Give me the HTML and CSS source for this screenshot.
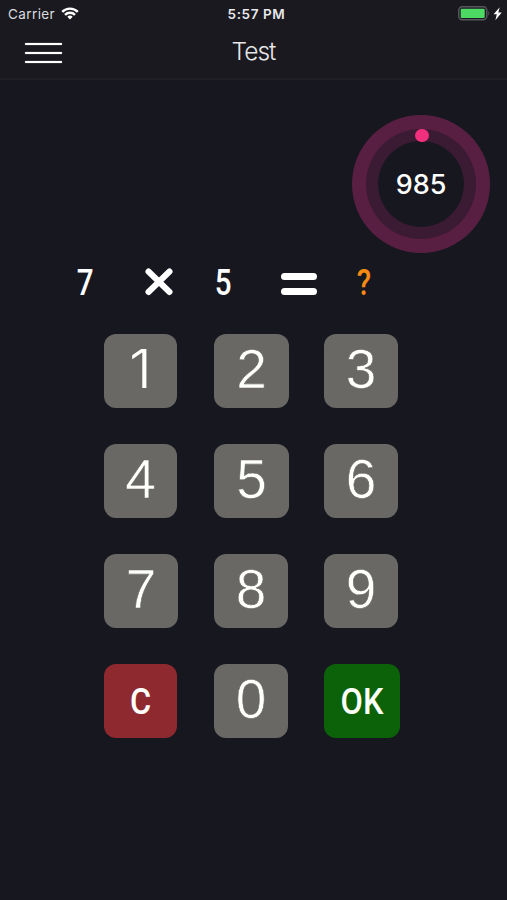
FILE: index.html
```html
<!DOCTYPE html>
<html lang="en">
<head>
<meta charset="utf-8">
<title>Test</title>
<link rel="stylesheet" href="styles.css">
</head>
<body>
<header class="header">
  <div class="status">
    <div class="status-left"><span class="carrier">Carrier</span>
      <svg class="wifi" width="18" height="13" viewBox="0 0 18 13" fill="none" stroke="#fff" stroke-width="2.4"><path d="M1.2 4.9a11 11 0 0 1 15.6 0"/><path d="M4 7.9a7 7 0 0 1 10 0"/><path d="M9 12.5 6.3 9.8a3.9 3.9 0 0 1 5.4 0z" fill="#fff" stroke="none"/></svg>
    </div>
    <span class="clock">5:57 PM</span>
    <svg class="battery" width="45" height="16" viewBox="0 0 45 16"><rect x=".75" y=".75" width="28" height="13" rx="3.5" fill="none" stroke="#55575b" stroke-width="1.5"/><rect x="2.7" y="2.7" width="24" height="9.2" rx="1" fill="#4cd964"/><path d="M30.3 4.7q2 2.5 0 5z" fill="#55575b"/><path d="M41.7 1.2 35.6 8.2h3.2l-1.4 6 6.3-7.8h-3.4z" fill="#fff"/></svg>
  </div>
  <div class="nav">
    <button class="menu" aria-label="Menu"><i></i><i></i><i></i></button>
    <h1 class="title">Test</h1>
  </div>
</header>
<main class="main">
  <div class="timer"><div class="track"><div class="face">985</div></div><i class="dot"></i></div>
  <div class="equation">
    <span class="din">7</span>
    <svg width="30" height="30" viewBox="0 0 30 30" stroke="#fff" stroke-width="6" stroke-linecap="round"><path d="M4.5 4.5l21 20.5M25.5 4.5l-21 20.5"/></svg>
    <span class="din">5</span>
    <span class="equals"><i></i><i></i></span>
    <span class="din unknown">?</span>
  </div>
  <div class="keypad">
    <button class="key narrow one"><span>1</span></button><button class="key wide"><span>2</span></button><button class="key"><span>3</span></button>
    <button class="key narrow"><span>4</span></button><button class="key wide"><span>5</span></button><button class="key"><span>6</span></button>
    <button class="key"><span>7</span></button><button class="key"><span>8</span></button><button class="key"><span>9</span></button>
    <button class="key narrow clear"><span>C</span></button><button class="key"><span>0</span></button><button class="key ok"><span>OK</span></button>
  </div>
</main>
</body>
</html>
```

FILE: styles.css
```css
* { box-sizing: border-box; }
body { margin: 0; height: 900px; overflow: hidden; background: #171720; color: #fff; font-family: Inter, sans-serif; }
i { display: block; }
button { border: 0; padding: 0; color: inherit; font: inherit; }
.header { height: 80px; background: #1a1920; border-bottom: 2px solid #1e1e25; }
.status { height: 27px; display: grid; grid-template-columns: 1fr auto 1fr; align-items: center; padding: 0 4px 0 8px; }
.status-left { display: flex; align-items: center; gap: 6px; font-size: 13.5px; color: #dcdcde; }
.carrier { letter-spacing: .4px; }
.clock { font-size: 13.5px; font-weight: 600; color: #e8e8ea; letter-spacing: .6px; margin-left: 2px; }
.battery { justify-self: end; }
.nav { height: 51px; padding: 0 25px; display: grid; grid-template-columns: 1fr auto 1fr; align-items: center; }
.menu { width: 37px; background: none; display: grid; gap: 7px; }
.menu i { height: 2px; border-radius: 1px; background: #fff; box-shadow: 0 0 1px #f2f2f6; }
.title { margin: -4px 0 0; font-size: 24.5px; line-height: 30px; font-weight: 300; letter-spacing: -1px; color: #e6e6e8; }
.main { display: flex; flex-direction: column; padding-top: 35px; }
.timer { position: relative; width: 138px; height: 138px; margin-left: 352px; padding: 14px; border-radius: 50%; background: #591f42; }
.track { height: 110px; padding: 12px; border-radius: 50%; background: #3b1a33; }
.face { height: 86px; border-radius: 50%; background: #171720; display: grid; place-items: center; font-size: 27px; font-weight: 550; }
.dot { position: absolute; left: 63px; top: 13.5px; width: 13.5px; height: 13.5px; border-radius: 50%; background: #f0307c; }
.equation { height: 30px; margin: 14px 0 0 75px; display: grid; grid-template-columns: 69px 63px 74px 73px 20px; align-items: start; }
.din { width: 20px; margin-top: 1px; text-align: center; font: 500 36px/30px Roboto, sans-serif; transform: scaleX(.82); }
.equation .din:nth-child(3) { margin-left: 6px; }
.equals { display: grid; gap: 8px; width: 36px; margin-top: 6px; }
.equals i { height: 7px; border-radius: 3.5px; background: #fff; }
.unknown { color: #f78a13; }
.keypad { margin: 37px 0 0 104px; display: grid; grid-template-columns: repeat(3, 74px); grid-auto-rows: 74px; gap: 36px; }
.key { width: 74px; height: 74px; border-radius: 12px; background: #696864; font: 400 55px/74px "Liberation Sans", sans-serif; color: #fffffc; }
.key span { display: block; margin-top: -4px; -webkit-text-stroke: .6px #696864; }
.key.one { font: 350 53px/74px Inter, sans-serif; }
.key.one span { -webkit-text-stroke: 0; transform: scaleX(1.1); }
.narrow { width: 73px; }
.wide { width: 75px; }
.key.clear, .key.ok { font: 500 36px/74px Roboto, sans-serif; }
.key.clear { background: #8e2930; }
.key.ok { width: 76px; background: #0c6208; }
.key.clear span, .key.ok span { margin-top: 1px; transform: scaleX(.9); -webkit-text-stroke: 0; }
```
